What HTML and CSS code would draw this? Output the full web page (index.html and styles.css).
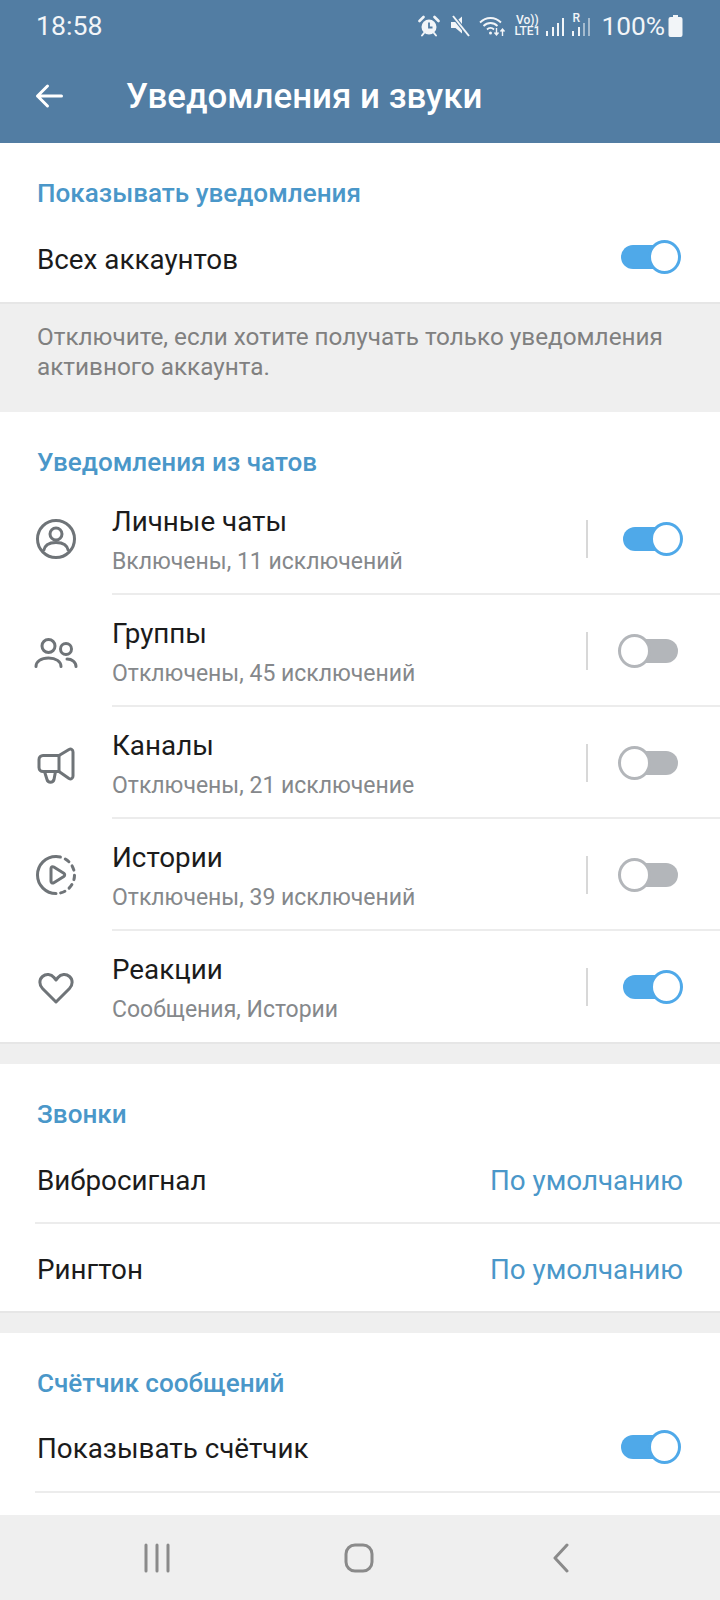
FILE: index.html
```html
<!DOCTYPE html>
<html>

<head>
  <title>Уведомления и звуки</title>
  <link rel="stylesheet" href="styles.css">
</head>

<body>
  <div class="screen">
    <div class="header">
      <div class="status">
        <span class="time">18:58</span>
        <div class="status-right">
          <svg class="st-alarm" width="22" height="22" viewBox="0 0 22 22">
            <circle cx="11" cy="12" r="7.500" fill="#f2f5f8" />
            <path d="M11 7.500v5h3.500" fill="none" stroke="#527da3" stroke-width="1.800" />
            <path d="M1.500 6 5.500 2M20.500 6l-4-4" stroke="#f2f5f8" stroke-width="2.600" stroke-linecap="round" />
            <path d="M6 18l-2 2.500M16 18l2 2.500" stroke="#f2f5f8" stroke-width="2" stroke-linecap="round" />
          </svg>
          <svg class="st-mute" width="22" height="24" viewBox="0 0 22 24">
            <path d="M1 8h4.500L12 2.500v17L5.500 14H1z" fill="#f2f5f8" />
            <path d="M3 2 19 22" stroke="#527da3" stroke-width="4" />
            <path d="M3 2 19 22" stroke="#f2f5f8" stroke-width="2" />
          </svg>
          <svg class="st-wifi" width="28" height="24" viewBox="0 0 28 24">
            <path d="M1 8.500C7 2.500 16 2.500 22 8.500M4.500 12C8.500 8 14.500 8 18.500 12M8 15.500c2-2 5-2 7 0" fill="none" stroke="#f2f5f8" stroke-width="1.800" />
            <circle cx="11.500" cy="19" r="1.500" fill="#f2f5f8" />
            <path d="M17.500 14v7M15.500 18.500l2 2.500 2-2.500M23.500 22v-7M21.500 17.500l2-2.500 2 2.500" fill="none" stroke="#f2f5f8" stroke-width="1.400" />
          </svg>
          <div class="volte"><span>Vo))</span><span>LTE1</span></div>
          <svg class="st-sig" width="20" height="22" viewBox="0 0 20 22">
            <path d="M2 21v-5M8 21v-9M13 21V8M18 21V3" stroke="#f2f5f8" stroke-width="2" />
          </svg>
          <div class="sim2">
            <span class="roam">R</span>
            <svg width="20" height="22" viewBox="0 0 20 22">
              <path d="M2 21v-5M8 21v-9" stroke="#f2f5f8" stroke-width="2" />
              <path d="M13 21V8M18 21V3" stroke="#a5bbcf" stroke-width="2" />
            </svg>
          </div>
          <span class="pct">100%</span>
          <svg class="st-batt" width="16" height="24" viewBox="0 0 16 24">
            <path d="M5 1h5v2h2.500a2 2 0 0 1 2 2v16a2 2 0 0 1-2 2h-10a2 2 0 0 1-2-2V5a2 2 0 0 1 2-2H5z" fill="#f2f5f8" />
          </svg>
        </div>
      </div>
      <div class="toolbar">
        <svg class="back" width="28" height="26" viewBox="0 0 28 26">
          <path d="M26.500 13H2.500M12.500 3 2.500 13l10 10" fill="none" stroke="#fff" stroke-width="3" stroke-linecap="round" stroke-linejoin="round" />
        </svg>
        <span class="title">Уведомления и звуки</span>
      </div>
    </div>

    <div class="content">
      <div class="section section-one">
        <div class="sec-title">Показывать уведомления</div>
        <div class="row plain">
          <span>Всех аккаунтов</span>
          <div class="switch on"><div class="knob"></div></div>
        </div>
      </div>
      <div class="hint">Отключите, если хотите получать только уведомления<br>активного аккаунта.</div>

      <div class="section section-chats">
        <div class="sec-title">Уведомления из чатов</div>

        <div class="chat-row">
          <svg class="ic" width="44" height="44" viewBox="0 0 44 44" fill="none" stroke="#6f7478" stroke-width="3">
            <circle cx="22" cy="22" r="18.500" />
            <circle cx="22" cy="17" r="6" />
            <path d="M9.500 34c1-6 5-8.500 12.500-8.500S33.500 28 34.500 34" />
          </svg>
          <div class="chat-text">
            <div class="chat-name">Личные чаты</div>
            <div class="chat-sub">Включены, 11 исключений</div>
          </div>
          <div class="vline"></div>
          <div class="switch on chat"><div class="knob"></div></div>
        </div>

        <div class="chat-row">
          <svg class="ic" width="44" height="44" viewBox="0 0 44 44" fill="none" stroke="#6f7478" stroke-width="3" stroke-linecap="round">
            <circle cx="14.500" cy="17" r="6.500" />
            <circle cx="32" cy="20" r="5.500" />
            <path d="M2 37.500c0-5 5-8.500 12.500-8.500S27 32.500 27 37.500M33 30c5 0 9 3 9 7.500" />
          </svg>
          <div class="chat-text">
            <div class="chat-name">Группы</div>
            <div class="chat-sub">Отключены, 45 исключений</div>
          </div>
          <div class="vline"></div>
          <div class="switch off chat"><div class="knob"></div></div>
        </div>

        <div class="chat-row">
          <svg class="ic" width="44" height="44" viewBox="0 0 44 44" fill="none" stroke="#6f7478" stroke-width="3" stroke-linejoin="round" stroke-linecap="round">
            <path d="M9 14.500h16v16H9a4 4 0 0 1-4-4v-8a4 4 0 0 1 4-4z" />
            <path d="M25 14.500 35 8.500c2-1 4 0 4 2.500v24c0 2.500-2 3.500-4 2.500l-10-7" />
            <path d="M10.500 30.500l2.500 8c1 3.500 6 3.500 7 0l1.500-8" />
          </svg>
          <div class="chat-text">
            <div class="chat-name">Каналы</div>
            <div class="chat-sub">Отключены, 21 исключение</div>
          </div>
          <div class="vline"></div>
          <div class="switch off chat"><div class="knob"></div></div>
        </div>

        <div class="chat-row">
          <svg class="ic" width="44" height="44" viewBox="0 0 44 44" fill="none" stroke="#6f7478" stroke-width="3" stroke-linejoin="round" stroke-linecap="round">
            <path d="M22 3.500a18.500 18.500 0 0 0 0 37" />
            <path d="M22 3.500a18.500 18.500 0 0 1 0 37" stroke-dasharray="4.500 5.200" />
            <path d="M17 15.500c0-1.500 1.500-2.300 2.800-1.500l10 6.200c1.200.8 1.200 2.500 0 3.300l-10 6.200c-1.300.8-2.800 0-2.800-1.500z" />
          </svg>
          <div class="chat-text">
            <div class="chat-name">Истории</div>
            <div class="chat-sub">Отключены, 39 исключений</div>
          </div>
          <div class="vline"></div>
          <div class="switch off chat"><div class="knob"></div></div>
        </div>

        <div class="chat-row last">
          <svg class="ic" width="44" height="44" viewBox="0 0 44 44" fill="none" stroke="#6f7478" stroke-width="3" stroke-linejoin="round">
            <path d="M22 37 8.500 23.500C5 20 5 14.500 8.500 11.500c3.500-3 8.500-2.500 11.500 1l2 2.500 2-2.500c3-3.500 8-4 11.500-1 3.500 3 3.500 8.500 0 12z" />
          </svg>
          <div class="chat-text">
            <div class="chat-name">Реакции</div>
            <div class="chat-sub">Сообщения, Истории</div>
          </div>
          <div class="vline"></div>
          <div class="switch on chat"><div class="knob"></div></div>
        </div>
      </div>
      <div class="gap"></div>

      <div class="section section-calls">
        <div class="sec-title">Звонки</div>
        <div class="row value-row line">
          <span>Вибросигнал</span>
          <span class="value">По умолчанию</span>
        </div>
        <div class="row value-row">
          <span>Рингтон</span>
          <span class="value">По умолчанию</span>
        </div>
      </div>
      <div class="gap"></div>

      <div class="section section-count">
        <div class="sec-title">Счётчик сообщений</div>
        <div class="row plain line">
          <span>Показывать счётчик</span>
          <div class="switch on"><div class="knob"></div></div>
        </div>
      </div>
    </div>

    <div class="navbar">
      <svg width="28" height="30" viewBox="0 0 28 30">
        <path d="M3 2v26M14 2v26M25 2v26" stroke="#8a8a8a" stroke-width="3" stroke-linecap="round" />
      </svg>
      <svg width="30" height="30" viewBox="0 0 30 30">
        <rect x="2" y="2" width="26" height="26" rx="9" fill="none" stroke="#8a8a8a" stroke-width="3" />
      </svg>
      <svg width="18" height="30" viewBox="0 0 18 30">
        <path d="M15 2 3 15l12 13" fill="none" stroke="#8a8a8a" stroke-width="3" stroke-linecap="round" stroke-linejoin="round" />
      </svg>
    </div>
  </div>
</body>

</html>
```

FILE: styles.css
```css
* {
  margin: 0;
  padding: 0;
  box-sizing: border-box;
}

body {
  font-family: Roboto, "Noto Sans", sans-serif;
  background-color: #fff;
  color: #1b1b1b;
}

.screen {
  width: 720px;
  height: 1600px;
  display: flex;
  flex-direction: column;
  overflow: hidden;
}

/* header */
.header {
  height: 143px;
  background-color: #527da3;
  color: #fff;
  padding: 0 36px;
  flex-shrink: 0;
}

.status {
  height: 52px;
  display: flex;
  align-items: center;
  justify-content: space-between;
  color: #f2f5f8;
}

.time {
  font-size: 26.700px;
}

.status-right {
  display: flex;
  align-items: center;
}

.st-mute {
  margin-left: 10px;
}

.st-wifi {
  margin-left: 7px;
}

.volte {
  width: 24px;
  display: flex;
  flex-direction: column;
  font-size: 12px;
  font-weight: 500;
  line-height: 11px;
  margin-left: 8px;
  align-items: center;
}

.st-sig {
  margin-left: 6px;
}

.sim2 {
  position: relative;
  margin-left: 6px;
}

.sim2 svg {
  display: block;
}

.roam {
  position: absolute;
  left: 1px;
  top: -4px;
  font-size: 12px;
  font-weight: 500;
}

.pct {
  font-size: 26.300px;
  margin-left: 10px;
}

.st-batt {
  margin-left: 3px;
}

.toolbar {
  height: 84px;
  padding-top: 4px;
  display: flex;
  align-items: center;
}

.back {
  flex-shrink: 0;
  margin-left: -1px;
}

.title {
  font-size: 34.900px;
  font-weight: 500;
  margin-left: 63px;
}

/* content */
.content {
  flex: 1;
  overflow: hidden;
}

.section {
  padding: 0 0 0 37px;
}

.sec-title {
  font-size: 26.100px;
  font-weight: 500;
  color: #4a97c9;
  line-height: 30px;
}

.section-one {
  height: 161px;
  padding-top: 35px;
  border-bottom: 2px solid #e6e6e6;
}

.section-chats {
  height: 632px;
  padding-top: 35px;
  border-bottom: 2px solid #e6e6e6;
}

.section-calls {
  height: 249px;
  padding-top: 35px;
  border-bottom: 2px solid #e6e6e6;
}

.section-count {
  padding-top: 35px;
}

.row {
  display: flex;
  align-items: center;
  justify-content: space-between;
  font-size: 27.800px;
  padding-right: 42px;
}

.row.plain {
  height: 94px;
  padding-top: 8px;
}

.section-count .row.plain {
  height: 95px;
  padding-top: 8px;
}

.value-row {
  height: 86px;
  padding-right: 37px;
}

.value-row:last-child {
  height: 88px;
  padding-top: 3px;
}

.section-calls .sec-title {
  margin-bottom: 9px;
}

.line {
  border-bottom: 2px solid #ececec;
  margin-left: -2px;
  padding-left: 2px;
}

.value {
  color: #4a97c9;
}

.hint {
  height: 108px;
  background-color: #efefef;
  color: #808080;
  font-size: 24.300px;
  line-height: 30px;
  padding: 18px 37px 0;
}

.gap {
  height: 20px;
  background-color: #efefef;
}

/* chat rows */
.section-chats {
  padding-left: 0;
}

.section-chats .sec-title {
  padding-left: 37px;
  margin-bottom: 6px;
}

.chat-row {
  height: 112px;
  display: flex;
  align-items: center;
  padding-left: 34px;
  position: relative;
}

.chat-row::after {
  content: "";
  position: absolute;
  left: 112px;
  right: 0;
  bottom: 0;
  height: 2px;
  background-color: #ececec;
}

.chat-row.last::after {
  display: none;
}

.ic {
  flex-shrink: 0;
}

.chat-text {
  margin-left: 34px;
  flex: 1;
  margin-top: 2px;
}

.chat-name {
  font-size: 27.800px;
  line-height: 34px;
}

.chat-sub {
  font-size: 23px;
  color: #85888b;
  line-height: 28px;
  margin-top: 9px;
}

.vline {
  width: 2px;
  height: 38px;
  background-color: #d8d8d8;
  margin-right: 33px;
  flex-shrink: 0;
}

/* switches */
.switch {
  width: 57px;
  height: 24px;
  border-radius: 12px;
  position: relative;
  flex-shrink: 0;
}

.row .switch {
  margin-bottom: 4px;
}

.switch.on.chat {
  margin-left: 2px;
  margin-right: 40px;
}

.switch.off.chat {
  margin-right: 42px;
}

.switch.on {
  background-color: #4fa9e9;
}

.switch.off {
  background-color: #b3b6ba;
}

.knob {
  width: 33px;
  height: 34px;
  border-radius: 50%;
  background-color: #fff;
  position: absolute;
  top: -5px;
}

.switch.on .knob {
  right: -3px;
  border: 3px solid #4fa9e9;
}

.switch.off .knob {
  left: -3px;
  border: 3px solid #b3b6ba;
}

/* nav */
.navbar {
  height: 85px;
  background-color: #efefef;
  flex-shrink: 0;
  display: flex;
  align-items: center;
  padding-left: 143px;
}

.navbar svg:nth-child(2) {
  margin-left: 173px;
}

.navbar svg:nth-child(3) {
  margin-left: 178px;
}
```
